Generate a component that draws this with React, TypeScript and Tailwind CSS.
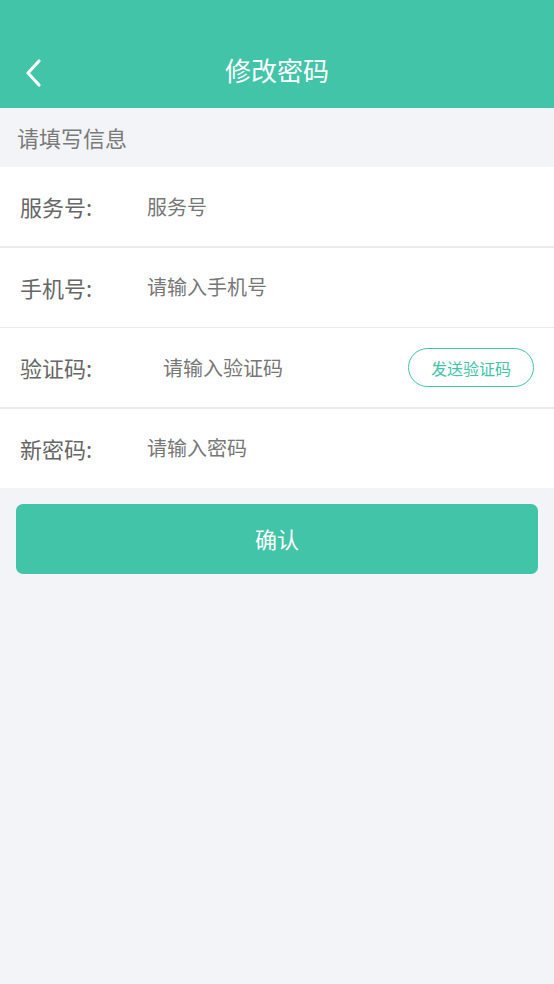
import { useState } from 'react';

const font = "font-['Noto_Sans_CJK_SC','Noto_Sans',sans-serif]";

const Row = ({
  label,
  placeholder,
  inputClass = 'pl-[50px]',
  action,
}: {
  label: string;
  placeholder: string;
  inputClass?: string;
  action?: React.ReactNode;
}) => {
  const [value, setValue] = useState('');
  return (
    <div className="flex h-[79px] items-center bg-white pl-[20px] pr-[20px]">
      <span className="w-[77px] shrink-0 text-[22px] text-[#666666]">{label}</span>
      <input
        value={value}
        onChange={(e) => setValue(e.target.value)}
        placeholder={placeholder}
        className={`min-w-0 flex-1 bg-transparent text-[20px] text-[#666666] outline-none placeholder:text-[#777777] ${inputClass}`}
      />
      {action}
    </div>
  );
};

const App = () => {
  return (
    <div className={`min-h-[984px] bg-[#f3f4f8] ${font}`}>
      {/* header */}
      <div className="relative flex h-[108px] items-end justify-center bg-[#41c4a7] pb-[20px]">
        <button className="absolute left-[22px] top-[56px] p-[2px]">
          <svg width="18" height="30" viewBox="0 0 18 30" fill="none">
            <path d="M15 3 L4 15 L15 27" stroke="white" strokeWidth="3.2" strokeLinecap="round" strokeLinejoin="round" />
          </svg>
        </button>
        <h1 className="text-[26px] leading-[36px] text-white">修改密码</h1>
      </div>

      <div className="flex h-[59px] items-center px-[17px] text-[22px] text-[#7a7a7a]">请填写信息</div>

      <div className="flex flex-col gap-[1.5px] bg-[#ebebeb]">
        <Row label="服务号:" placeholder="服务号" />
        <Row label="手机号:" placeholder="请输入手机号" />
        <Row
          label="验证码:"
          placeholder="请输入验证码"
          inputClass="pl-[66px]"
          action={
            <button className="h-[39px] w-[126px] shrink-0 rounded-full border-[1.5px] border-[#41c4a7] text-[16px] text-[#41c4a7]">
              发送验证码
            </button>
          }
        />
        <Row label="新密码:" placeholder="请输入密码" />
      </div>

      <div className="px-[16px] pt-[16px]">
        <button className="h-[70px] w-full rounded-[7px] bg-[#41c4a7] text-[22px] text-white">确认</button>
      </div>
    </div>
  );
};

export default App;
